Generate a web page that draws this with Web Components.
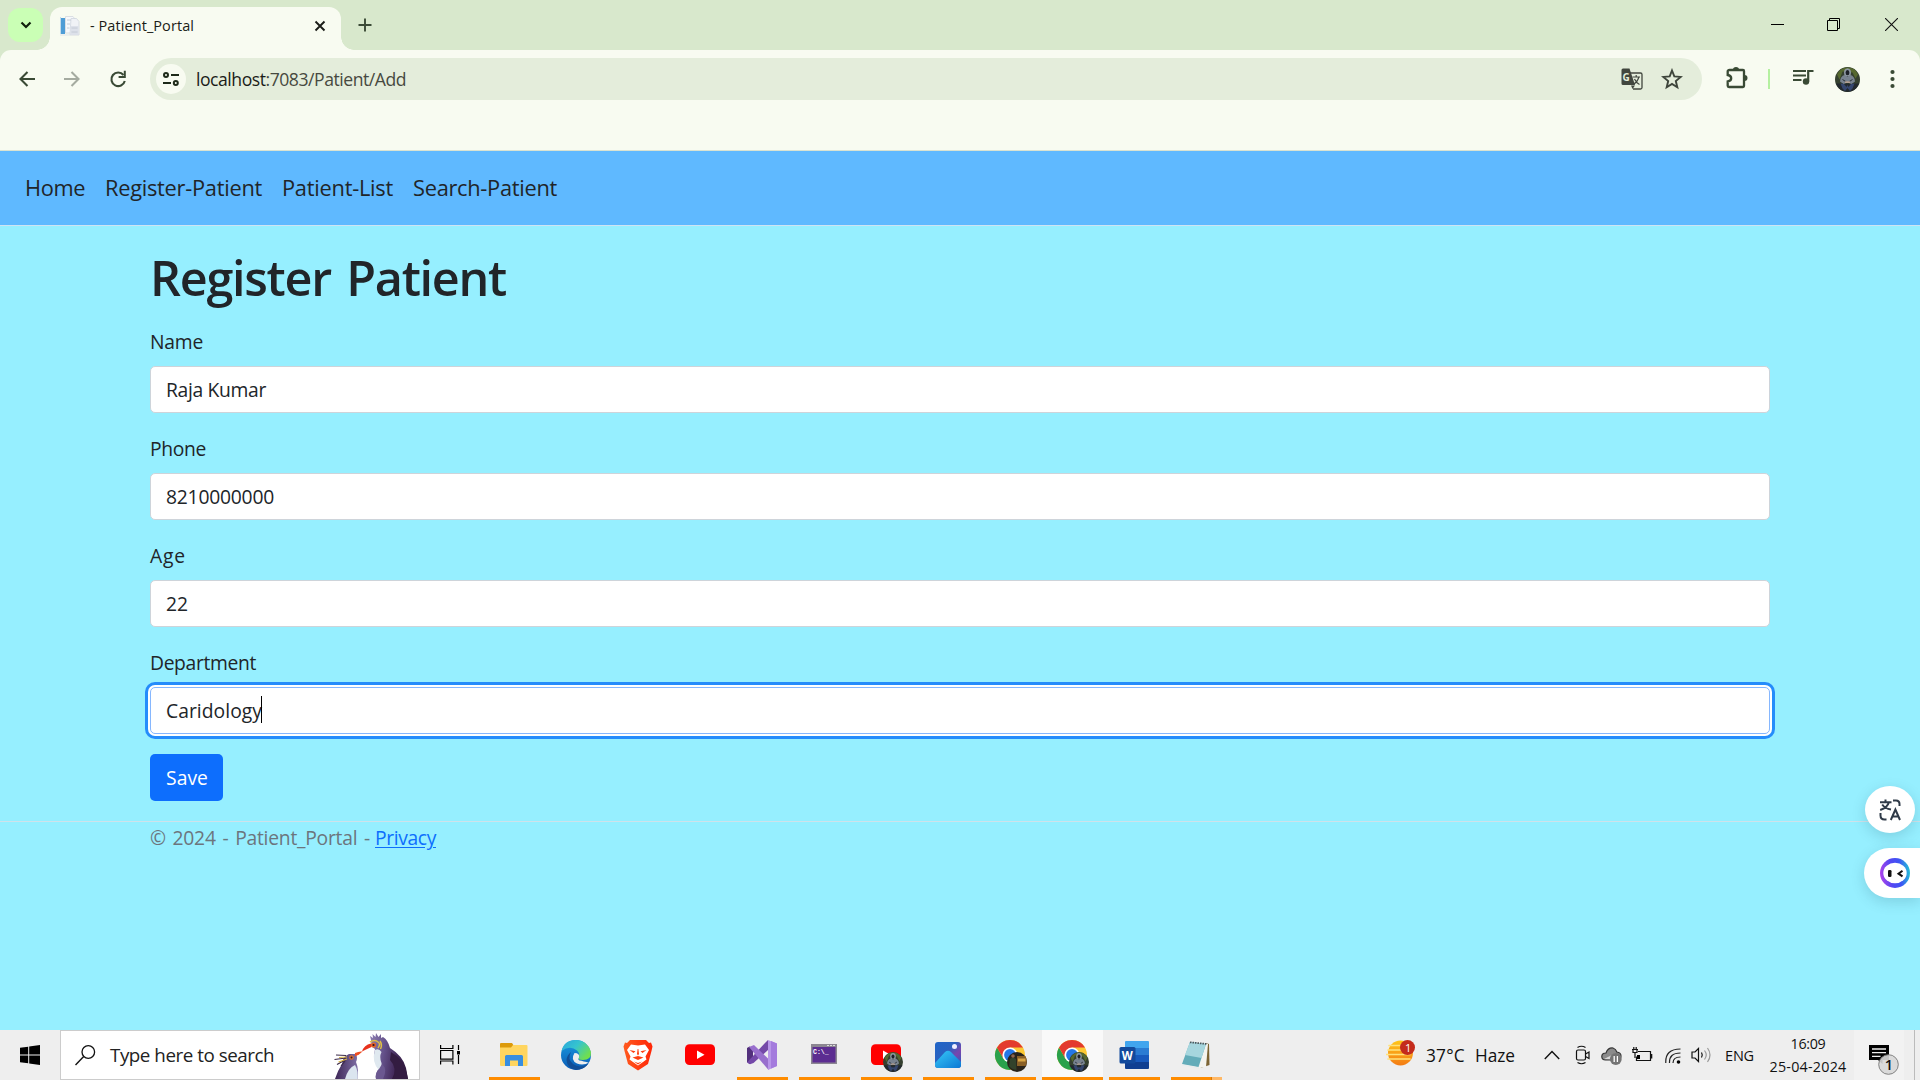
<!DOCTYPE html>
<html lang="en">
<head>
<meta charset="utf-8">
<title>- Patient_Portal</title>
<style>
html,body{margin:0;height:100%;overflow:hidden}
body{font-family:"Open Sans","Noto Sans",sans-serif;color:#212529;background:#96efff}
</style>
</head>
<body>
<desktop-screen></desktop-screen>
<script>
const define = (name, html, setup) => {
  const t = document.createElement('template');
  t.innerHTML = html;
  customElements.define(name, class extends HTMLElement {
    connectedCallback() {
      if (this.shadowRoot) return;
      this.attachShadow({mode: 'open'}).append(t.content.cloneNode(true));
      if (setup) setup(this, this.shadowRoot);
    }
  });
};

/* ---------- icons: [width, height, svg body] ---------- */
const avatar = (x, y, r) => `<circle cx="${x}" cy="${y}" r="${r}" fill="#35402f"/>
<g transform="translate(${x} ${y}) scale(${r / 12.5})"><path d="M-10.500-5Q-7-12 0-12 8-12 10.500-5L8-1 5-7-5-8-8 0z" fill="#56682f"/><path d="M-11.500 4h23q-3 8-11.500 8.500Q-8.500 12-11.500 4z" fill="#23292e"/><path d="M-3.500-7Q-3.500-11 0-11.300 3.500-11 3.500-7L3-3.500H-3z" fill="#8d97a2"/><ellipse cy="-6.800" rx="1.900" ry="2.600" fill="#1d2028"/><path d="M-3-4.500Q-7-3.500-7.500 2L-4 4.500 0 3 4 4.500 7.500 2Q7-3.500 3-4.500L0-3z" fill="#78828f"/><path d="M-5 0L-1 2.500M5 0L1 2.500" stroke="#2a3038" stroke-width="1"/><path d="M-2.500 1.800h5v1.700h-5z" fill="#b39f92"/><path d="M-7 4L-3.500 4.500-1 7.500 0 5.500 1 7.500 3.500 4.500 7 4 5 9 2.500 11.500 0 8.500-2.500 11.500-5 9z" fill="#35466f"/></g>`;
const chrome = (x, y) => `<g transform="translate(${x} ${y})"><circle r="15" fill="#fcc934"/><path d="M-13-7.500A15 15 0 0 0 0 15L6.500 3.800 0 7.500-6.500 3.800z" fill="#2aa14b"/><path d="M-13-7.500L-6.500 3.800 0-7.500H13A15 15 0 0 0-13-7.500z" fill="#e33b2e"/><circle r="7.600" fill="#fff"/><circle r="5.900" fill="#2477e6"/></g>`;
const ICONS = {
  down: [12, 10, `<path d="M1.500 2.500L6 7l4.500-4.500" fill="none" stroke="#10200c" stroke-width="2.200"/>`],
  favicon: [20, 20, `<path d="M1 2h4v16H1z" fill="#4f9dd6"/><path d="M0 1h1v17H0z" fill="#c3dcec"/><path d="M5.500.500h7.500l3 4V17H5.500z" fill="#f6f8fb" stroke="#d3d8e0" stroke-width=".8"/><path d="M11 2.500h5.500l2.500 3V19h-9z" fill="#f0f2f6" stroke="#cfd5de" stroke-width=".8"/><path d="M10.500 10h8v9h-8z" fill="#dde1ea"/><path d="M11.500 12h6M11.500 16h6M7 4h4M7 8h3M7 12h2.500" stroke="#c2c8d4" stroke-width=".9"/><path d="M0 19h10" stroke="#dfe3e8"/>`],
  tabclose: [12, 12, `<path d="M1.500 1.500l9 9M10.500 1.500l-9 9" stroke="#1b1c18" stroke-width="1.900"/>`],
  plus: [14, 14, `<path d="M7 .5v13M.5 7h13" stroke="#3b4b36" stroke-width="1.900"/>`],
  min: [13, 13, `<path d="M0 6.500h13" stroke="#000"/>`],
  max: [13, 13, `<path d="M.5 2.500h10v10H.5zM2.500 2.500v-2h10v10h-2" fill="none" stroke="#000"/>`],
  close: [13, 13, `<path d="M0 0l13 13M13 0L0 13" stroke="#111" stroke-width="1.100"/>`],
  back: [16, 16, `<path d="M16 8H2M8.500 1L1.500 8l7 7" fill="none" stroke="#3a4a35" stroke-width="2.100"/>`],
  forward: [16, 16, `<path d="M0 8h14M7.500 1l7 7-7 7" fill="none" stroke="#a5aba0" stroke-width="2.100"/>`],
  reload: [18, 18, `<path d="M14.500 5A6.800 6.800 0 1 0 15.800 11" fill="none" stroke="#3a4a35" stroke-width="2.100"/><path d="M16.800.8v7.200H9.600V6h5.200V.8z" fill="#3a4a35"/>`],
  site: [16, 16, `<g fill="none" stroke="#1e2a1a" stroke-width="2"><circle cx="3" cy="4" r="2"/><path d="M8 4h8M0 12h8"/><circle cx="12.800" cy="12" r="2"/></g>`],
  gtranslate: [22, 22, `<path d="M9 5h10.500q1.500 0 1.500 1.500v13q0 1.500-1.500 1.500H12" fill="none" stroke="#41463e" stroke-width="1.300"/><path d="M2 .5h6.500L14 17H2Q.5 17 .5 15.500V2Q.5.5 2 .5zM10 17.500h4L11.500 21z" fill="#41463e"/><text x="1.600" y="12.700" font-size="10" font-weight="700" font-family="Open Sans" fill="#e4edda">G</text><path d="M11.500 9h7.500M15.200 7v2M17.800 9q-1 4.500-5 7M13.500 11q1.500 3.500 5 5.500" fill="none" stroke="#41463e" stroke-width="1.200"/>`],
  star: [22, 22, `<path d="M11 2.500l2.300 5.900 6.400.5-4.900 4.100 1.500 6.200L11 15.900l-5.300 3.300L7.200 13 2.300 8.900l6.400-.5z" fill="none" stroke="#3e453b" stroke-width="1.900"/>`],
  puzzle: [22, 22, `<path d="M3.500 3H17q1 0 1 1v15q0 1-1 1H3q-1.300 0-1.300-1.300v-4.200Q5.200 14 5.200 11.300T1.700 8V4.300Q1.700 3 3.500 3z" fill="none" stroke="#3a4a35" stroke-width="2.300"/><path d="M7 2.500Q7 0 10 0t3 2.500zM18.500 8Q21.500 8 21.500 11t-3 3z" fill="#3a4a35"/>`],
  music: [21, 17, `<path d="M0 2h13M0 6.500h13M0 11h8.500" stroke="#3a4a35" stroke-width="2"/><circle cx="13" cy="12.500" r="3.200" fill="#3a4a35"/><path d="M15.200 12.500V2h5.300" fill="none" stroke="#3a4a35" stroke-width="2.200"/>`],
  avatar: [25, 25, avatar(12.5, 12.5, 12.5)],
  dots: [5, 20, `<g fill="#3a4a35"><circle cx="2.500" cy="3" r="2.100"/><circle cx="2.500" cy="10" r="2.100"/><circle cx="2.500" cy="17" r="2.100"/></g>`],
  start: [20, 20, `<path d="M0 2.800L8.200 1.700V9.500H0zM9.200 1.500L20 0V9.500H9.200zM0 10.500h8.200v7.800L0 17.200zM9.200 10.500H20V20L9.200 18.500z"/>`],
  search: [21, 21, `<circle cx="13.300" cy="7" r="6.300" fill="none" stroke="#111" stroke-width="1.300"/><path d="M8.700 11.500L.5 20" stroke="#111" stroke-width="1.400"/>`],
  penguins: [76, 48, `<defs><linearGradient id="p" x1="0" x2="1" y1=".4" y2=".6"><stop stop-color="#8778ac"/><stop offset=".35" stop-color="#64518a"/><stop offset=".7" stop-color="#432a5a"/><stop offset="1" stop-color="#2f1a3d"/></linearGradient><linearGradient id="q" x1="0" x2="1"><stop stop-color="#3d2757"/><stop offset="1" stop-color="#7f6fa5"/></linearGradient></defs>
<path d="M2 48Q5 39 9 33 10 25 16 23L23 23Q25 27 23 31 26 38 24.500 48z" fill="url(#q)"/><path d="M12 48Q15 37 22 34 25.500 40 24.500 48z" fill="#dbe5ef"/><path d="M13 24.500L3 24M13 27L1.500 28.500M13 28.500L4 33.500M12 30L8 35" fill="none" stroke="#3c2a4a" stroke-width="1.200"/><path d="M14 26L6 26.500M14 28L5.500 31" stroke="#d9b545" stroke-width="1.200"/><path d="M22 22Q26 20 29.500 20.500L26 23.500 22 25.500z" fill="#ee4f22"/><circle cx="18.500" cy="26.500" r="2.200" fill="#e0702a"/><circle cx="18.500" cy="26.500" r="1" fill="#2a1735"/>
<path d="M38 9L37 5l3 2-.5-4 3 3 .5-4 2.500 4L48 3l0 4 2-1Q55 9 57 17 70 25 73 37L75 48H43Q42 43 46 37 39 29 42 18 38 16 38 9z" fill="url(#p)"/><path d="M42 19Q46 17 48.500 21 46 26 48.500 32L49 37 46.500 40Q38 31 42 19z" fill="#dfe8ef"/><path d="M58 21Q70 28 73 39L75 48H59Q65 37 57 29z" fill="#331c41"/><path d="M49 33Q55 38 50 48H43Q41.500 43 46 38z" fill="#6b5890"/><path d="M29 20.500Q31 14 38 12.500L38.500 16 32 19z" fill="#e8321c"/><path d="M37 11Q42 8 45 11 48 13 45 17M47 10q2.500 4 .5 8" fill="none" stroke="#dfc044" stroke-width="1.500"/><circle cx="40.500" cy="14" r="2.600" fill="#e46425"/><circle cx="40.500" cy="14" r="1.100" fill="#25122c"/>`],
  taskview: [20, 20, `<path d="M.6 0v3.500h12.300V0M.6 19.500V16h12.300v3.500M.6 5.500h12.300v8.700H.6zM18.500 0v5M18.500 10v9" fill="none" stroke="#000" stroke-width="1.200"/><path d="M17 6h3v3.500h-3z"/>`],
  explorer: [62, 50, `<path d="M16 14q0-1 1-1h11l2 3v6H16z" fill="#dc9a0b"/><path d="M16 17.500h11l2-2.500h13.500q1 0 1 1v19q0 1-1 1H17q-1 0-1-1z" fill="#ffd55f"/><path d="M21 36V26.500q0-1.500 1.500-1.500h15q1.500 0 1.500 1.500V36h-5v-5.500h-8V36z" fill="#388ee0"/>`],
  edge: [62, 50, `<defs><linearGradient id="e1" x1="0" y1="0" x2="1" y2=".6"><stop stop-color="#2ba5dc"/><stop offset=".5" stop-color="#35c4cf"/><stop offset="1" stop-color="#71df4d"/></linearGradient><linearGradient id="e2" x1="0" y1="0" x2="0" y2="1"><stop stop-color="#1a9be0"/><stop offset="1" stop-color="#0b5bb5"/></linearGradient></defs><circle cx="30" cy="25" r="15" fill="url(#e2)"/><path d="M15.500 21Q18 10 30 10 42 10.500 45 22 45.500 30 37 30 31.500 30 32.500 27.500 34.500 24 31 20.500 24 15 15.500 21z" fill="url(#e1)"/><path d="M25 22Q21 29 27 34 34 39 42.500 33.500 38 40 30 40 21 38 20.500 30 21 25 25 22z" fill="#124e96"/><path d="M28.500 23Q24 30 31 33.500 38 36 45 31.500L43.500 33Q37 31 33.500 30.500 31.500 29.500 33 27.500 34 23 28.500 23z" fill="#eee"/>`],
  brave: [62, 50, `<defs><linearGradient id="b" x1="0" x2="1"><stop stop-color="#ff5a1f"/><stop offset="1" stop-color="#ff2506"/></linearGradient></defs><path d="M22 10h16l3 3 2-.5 1.500 4L43.500 21l-3.500 13-10 6.500L20 34 16.500 21l-1-4.500 1.500-4 2 .5z" fill="url(#b)"/><path d="M23 14.500l7 1 7-1 4 5.500-3.500 6.500 1 3-3.500 2.500-5 3.500-5-3.500-3.500-2.500 1-3L19 20z" fill="#fff"/><path d="M21.500 20l6 1.200-2 1.800zM38.500 20l-6 1.200 2 1.800zM29.600 19h.8l.6 5-1 1.500-1-1.500zM24.500 27.500l5.500-1.500 5.500 1.500-5.500 2.500zM26 31.500l4 1.500 4-1.500-4 3z" fill="#ff4012"/>`],
  youtube: [62, 50, `<rect x="15" y="14.300" width="30" height="20.700" rx="4.500" fill="#f00"/><path d="M27 20.500l7.500 4.300-7.500 4.300z" fill="#fff"/>`],
  vs: [62, 50, `<path d="M15 18l2.500-1.500 3.500 2v13l-3.500 2.500L15 32z" fill="#52307c"/><path d="M15 32.500l3 1.800 3.500-1.300L36 20V10L33 13z" fill="#7449a8"/><path d="M17 17l5-2L36.500 29v11z" fill="#986fcd"/><path d="M36 10l9 3.500v22.500L36 40z" fill="#b896e8"/><path d="M39 11l6 2.500v22.500l-6 2.500z" fill="#a47bdd"/>`],
  cmd: [62, 50, `<rect x="17" y="14" width="26" height="20" fill="#8b8691"/><path d="M18.500 17h23v15.500h-23z" fill="#5c2d91"/><path d="M33 15.500h8" stroke="#ddd" stroke-dasharray="2 1"/><text x="19" y="23.500" font-size="6.500" font-weight="700" font-family="Liberation Mono" fill="#fff">C:\\_</text>`],
  youtube2: [62, 50, `<rect x="15" y="14.300" width="30" height="20.700" rx="4.500" fill="#f00"/><path d="M27 20.500l7.500 4.300-7.500 4.300z" fill="#fff"/>${avatar(37, 32, 10)}`],
  photos: [62, 50, `<defs><linearGradient id="ph" x1="0" y1="0" x2="1" y2="1"><stop stop-color="#2065c8"/><stop offset=".4" stop-color="#2862c0"/><stop offset=".65" stop-color="#7945ad"/><stop offset="1" stop-color="#1a61c2"/></linearGradient><linearGradient id="pi" x1="0" y1="0" x2="1" y2="1"><stop stop-color="#37c9f7"/><stop offset="1" stop-color="#0a78d4"/></linearGradient></defs><rect x="17" y="12" width="26" height="26" rx="3" fill="url(#ph)"/><path d="M17 33L27 22q3-2.500 6 0l10 10v3q0 3-3 3H20q-3 0-3-3z" fill="url(#pi)"/><circle cx="36.500" cy="16.500" r="2.500" fill="#eef"/>`],
  chrome1: [62, 50, chrome(30, 25) + `<circle cx="37" cy="32" r="10" fill="#29231a"/><path d="M37 26h8.500q2.500 6 0 10h-8.500z" fill="#8a6026"/><path d="M38 28.500h7.500v3h-7.500z" fill="#d9a645"/><path d="M30 29q3-3 6 0l.5 11q-5-.5-7.500-4z" fill="#32422b"/><circle cx="33" cy="26" r="1.800" fill="#8d654e"/>`],
  chrome2: [62, 50, chrome(30, 25) + avatar(37, 32, 10)],
  word: [62, 50, `<path d="M21 12q0-1 1-1h22q1 0 1 1v6H21z" fill="#41a5ee"/><path d="M21 18h24v7H21z" fill="#2b7cd3"/><path d="M21 25h24v7H21z" fill="#185abd"/><path d="M21 32h24v6q0 1-1 1H22q-1 0-1-1z" fill="#103f91"/><rect x="15.500" y="17" width="16" height="16.500" rx="1.500" fill="#134a9c"/><text x="17.800" y="29.500" font-size="12" font-weight="700" font-family="Open Sans" fill="#fff" textLength="11" lengthAdjust="spacingAndGlyphs">W</text>`],
  notepad: [62, 50, `<path d="M40 13l3 1 .5 21-9 3z" fill="#7c6433"/><path d="M39 13l3 1-2 23-7 1z" fill="#f4f4ef"/><path d="M24 12l16 2-7.500 23L16 34z" fill="#63acb9"/><path d="M24 12l16 2-4.500 14L19 25z" fill="#a6d6de"/><path d="M24 12.300l17 1.700" stroke="#4b5559" stroke-width="1.800" stroke-dasharray="1.500 1"/><path d="M16 35l17 3" stroke="#e7eded"/>`],
  haze: [30, 28, `<defs><linearGradient id="h" x1="0" y1="0" x2="0" y2="1"><stop stop-color="#ffc61a"/><stop offset="1" stop-color="#f37b14"/></linearGradient></defs><circle cx="14.500" cy="14" r="12.500" fill="url(#h)"/><path d="M3 6.500h13M2 11h13M0 15.500h24M2 20h22" stroke="#ffe27b" stroke-width="1.700" stroke-linecap="round"/><circle cx="21.500" cy="8.500" r="7.500" fill="#c42b1c"/><text x="19" y="12.600" font-size="11" font-family="Open Sans" fill="#fff">1</text>`],
  up: [16, 10, `<path d="M.8 9L8 1.500 15.200 9" fill="none" stroke="#111" stroke-width="1.400"/>`],
  cam: [16, 20, `<g fill="none" stroke="#111" stroke-width="1.200"><rect x="1.500" y="5" width="9" height="10" rx="1.500"/><path d="M10.500 9l3.500-2v6.500l-3.500-2M2.500 2.500Q6.500 0 10.500 2.500M2.500 17.500q4 2.500 8 0"/></g>`],
  cloud: [21, 20, `<path d="M4.500 15Q.8 15 .8 11.500T5 8Q7 2.500 12 3 15 4 15.800 7 20 7.500 20 11T16 15z" fill="#8b8b8b" stroke="#333" stroke-width="1.200"/><path d="M3 14L14 8.500l6 3L16 14.500z" fill="#d9d9d9"/><circle cx="14.800" cy="14" r="5.900" fill="#747474"/><path d="M13.200 11v6M16.400 11v6" stroke="#fff" stroke-width="1.300"/>`],
  battery: [21, 16, `<path d="M6 4.500h12.500v9H4.500v-4M18.500 7.500h1.200v3.500h-1.200" fill="none" stroke="#111" stroke-width="1.200"/><path d="M1 2.500v3h4v-3M3 5v6M0 2.500h6M1.800 0v2.500M4.200 0v2.500" fill="none" stroke="#111" stroke-width="1.200"/><path d="M5 8h3v4H5z"/>`],
  wifi: [16, 17, `<g fill="none" stroke="#222" stroke-width="1.200"><path d="M.8 16Q0 2 15.500 2M4.500 16Q4 6 15.500 6M8 16Q8 10 15.500 10"/></g><circle cx="13.500" cy="15" r="1.800"/>`],
  volume: [21, 18, `<g fill="none" stroke="#111" stroke-width="1.200"><path d="M1 6h3L7.500 2.500v13L4 12H1z"/><path d="M10.500 6.500q1.500 2.500 0 5"/></g><path d="M13.500 4.500q3.500 4.500 0 9M16.500 2q5 7 0 14" fill="none" stroke="#999" stroke-width="1.200"/>`],
  notice: [31, 31, `<path d="M1 1h20v15H14.500v4L10 16H1z"/><path d="M4 5h14M4 8.700h14M4 12.300h8.500" stroke="#eee" stroke-width="1.300"/><circle cx="20.500" cy="20.500" r="9.800" fill="#d7d7d7" fill-opacity=".9" stroke="#777" stroke-width=".9"/><text x="16.800" y="25.800" font-size="14.500" font-weight="600" font-family="Open Sans" fill="#111">1</text>`],
  translate: [22, 22, `<g fill="none" stroke="#2f3a48" stroke-width="2"><path d="M1 3.200h11.500M6.500.5v2.700M9.800 3.500Q8.500 8.500 1.200 11M3.200 5.500Q6 9.500 12 10.500M14 1.500h3q3.500 0 3.500 3.500v2M1.500 14v2.500q0 4 4 4h2"/><path d="M11.800 21l4.600-10.500L21 21M13.200 17.500h6.500"/></g>`],
  bot: [30, 30, `<defs><linearGradient id="r" x1="0" y1=".8" x2="1" y2=".7"><stop stop-color="#b443ea"/><stop offset=".4" stop-color="#5347f2"/><stop offset=".7" stop-color="#3d55f4"/><stop offset="1" stop-color="#25b9d8"/></linearGradient></defs><circle cx="15" cy="15" r="15" fill="url(#r)"/><ellipse cx="15" cy="15" rx="11.700" ry="10.300" fill="#fff"/><rect x="8" y="12" width="3.500" height="7" rx="1.300" fill="#111"/><path d="M22.500 12.800l-4 2.900 4 2.700" fill="none" stroke="#111" stroke-width="2"/>`]
};
define('ui-icon', `<style>:host{display:block;flex:none}svg{display:block}</style>`, (el, root) => {
  const [w, h, body] = ICONS[el.getAttribute('name')];
  root.innerHTML += `<svg width="${w}" height="${h}" viewBox="0 0 ${w} ${h}">${body}</svg>`;
});

/* text tracked to an exact advance width */
define('fit-text', `<style>:host{display:block;flex:none;white-space:nowrap}span{display:inline-block}</style><span><slot></slot></span>`, (el, root) => {
  const w = +el.getAttribute('w'), s = root.querySelector('span');
  const n = el.textContent.length, natural = s.getBoundingClientRect().width;
  s.style.letterSpacing = ((w - natural) / n) + 'px';
  el.style.width = w + 'px';
});

define('tab-strip', `<style>
:host{display:flex;height:50px;background:#d8e8cc;align-items:flex-start}
.menu{width:35px;height:34px;margin:8px 0 0 8px;border-radius:12px;background:#caffb5;display:flex;align-items:center;justify-content:center}
.tab{box-sizing:border-box;width:291px;height:43px;margin:7px 0 0 7px;background:#f8fbf1;border-radius:12px 12px 0 0;display:flex;align-items:center;padding:0 15px 6px 10px;position:relative}
.tab::before,.tab::after{content:"";position:absolute;bottom:0;width:13px;height:13px}
.tab::before{left:-13px;background:radial-gradient(circle at 0 0,transparent 12.500px,#f8fbf1 13px)}
.tab::after{right:-13px;background:radial-gradient(circle at 100% 0,transparent 12.500px,#f8fbf1 13px)}
fit-text{font-size:14.500px;line-height:20px;color:#1b1c18;margin-left:10px}
.x{margin-left:auto}.plus{margin:18px 0 0 17px}
.win{display:flex;gap:44px;margin:18px 22px 0 auto}
.win .m{margin:0 1px 0 -1px}
</style>
<div class="menu"><ui-icon name="down"></ui-icon></div>
<div class="tab"><ui-icon name="favicon"></ui-icon><fit-text w="104">- Patient_Portal</fit-text><ui-icon class="x" name="tabclose"></ui-icon></div>
<ui-icon class="plus" name="plus"></ui-icon>
<div class="win"><ui-icon name="min"></ui-icon><ui-icon class="m" name="max"></ui-icon><ui-icon name="close"></ui-icon></div>`);

define('tool-bar', `<style>
:host{display:block;height:100px;background:#d8e8cc}
.sheet{box-sizing:border-box;height:100px;background:#f8fbf1;border-radius:11px 11px 0 0;padding:8px 0 0}
.row{display:flex;align-items:center;height:42px}
.box{width:1552px;height:42px;border-radius:21px;background:#e4eddb;display:flex;align-items:center;box-sizing:border-box;padding:0 19px 0 6px;margin-left:23px}
.site{width:30px;height:30px;border-radius:50%;background:#f8fbf1;display:flex;align-items:center;justify-content:center}
fit-text{font-size:17.600px;line-height:24px;color:#474940;margin-left:10px}b{font-weight:400;color:#1b1c18}
.sep{width:2px;height:20px;background:#b5f0a0;margin:0 23px 0 20px}
</style><div class="sheet"><div class="row">
<ui-icon name="back" style="margin-left:19px"></ui-icon><ui-icon name="forward" style="margin-left:29px"></ui-icon><ui-icon name="reload" style="margin-left:29px"></ui-icon>
<div class="box"><div class="site"><ui-icon name="site"></ui-icon></div><fit-text w="210"><b>localhost</b>:7083/Patient/Add</fit-text><ui-icon name="gtranslate" style="margin-left:auto"></ui-icon><ui-icon name="star" style="margin-left:18px"></ui-icon></div>
<ui-icon name="puzzle" style="margin:-3px 0 0 24px"></ui-icon><div class="sep"></div><ui-icon name="music" style="margin-top:-3px"></ui-icon><ui-icon name="avatar" style="margin-left:21px"></ui-icon><ui-icon name="dots" style="margin-left:30px"></ui-icon>
</div></div>`);

define('site-nav', `<style>
:host{display:flex;height:76px;box-sizing:border-box;border-top:1px solid #d9e3d2;border-bottom:1px solid #cfe3f3;background:#5fb9ff;align-items:center;padding:0 0 0 25px;gap:20px;font-size:21.800px;line-height:34px;color:#212529}
</style><fit-text w="60">Home</fit-text><fit-text w="157">Register-Patient</fit-text><fit-text w="111">Patient-List</fit-text><fit-text w="144">Search-Patient</fit-text>`);

define('labelled-input', `<style>
:host{display:flex;flex-direction:column;gap:9px;padding-top:1px;font-size:19.300px;line-height:30px}
.in{box-sizing:border-box;height:47px;border:1px solid #ced4da;border-radius:5px;background:#fff;padding:0 15px;display:flex;align-items:center}
:host([focused]) .in{border-color:#86b7fe;box-shadow:0 0 0 2px #fff,0 0 0 5px #258cfb}
i{display:none;width:1px;height:27px;background:#000;margin:-2px 0 0 -1px}
:host([focused]) i{display:block}
</style>`, (el, root) => {
  const a = n => el.getAttribute(n);
  root.innerHTML += `<fit-text w="${a('lw')}">${a('label')}</fit-text><div class="in"><fit-text w="${a('vw')}">${a('value')}</fit-text><i></i></div>`;
});

define('patient-form', `<style>
:host{display:block;padding:21px 150px 20px}
h1{margin:0 0 19px;font-size:48.500px;line-height:60px;font-weight:600;word-spacing:4px}
.fields{display:flex;flex-direction:column;gap:20px}
.save{box-sizing:border-box;width:73px;height:47px;margin-top:20px;border-radius:5px;background:#0d6efd;color:#fff;display:flex;align-items:center;padding-left:16px;font-size:19.300px;line-height:30px}
</style><h1><fit-text w="356">Register Patient</fit-text></h1><div class="fields">
<labelled-input label="Name" lw="53" value="Raja Kumar" vw="100"></labelled-input>
<labelled-input label="Phone" lw="56" value="8210000000" vw="108"></labelled-input>
<labelled-input label="Age" lw="36" value="22" vw="22"></labelled-input>
<labelled-input label="Department" lw="106" value="Caridology" vw="96" focused></labelled-input>
</div><div class="save"><fit-text w="42">Save</fit-text></div>`);

define('site-footer', `<style>
:host{display:flex;gap:5px;border-top:1px solid #cfe2ea;padding:0 150px;font-size:19.300px;line-height:31px;color:#6c757d;word-spacing:2px}
a{color:#0d6efd}u{text-underline-offset:2px}
</style><fit-text w="220">© 2024 - Patient_Portal -</fit-text><a><fit-text w="61"><u>Privacy</u></fit-text></a>`);

define('float-tools', `<style>
:host{position:absolute;right:0;top:786px;display:flex;flex-direction:column;align-items:flex-end;gap:15px}
div{background:#fff;display:flex;align-items:center;box-sizing:border-box;box-shadow:0 4px 14px rgba(20,70,90,.18)}
.t{width:50px;height:47px;border-radius:50%;margin-right:5px;justify-content:center}
.b{width:56px;height:50px;border-radius:25px 0 0 25px;padding-left:16px}
</style><div class="t"><ui-icon name="translate"></ui-icon></div><div class="b"><ui-icon name="bot"></ui-icon></div>`);

define('task-item', `<style>
:host{display:flex;width:62px;height:50px;flex:none;flex-direction:column}
.c{height:50px;width:62px}
.bar{height:3px;width:51px;margin:-3px 0 0 5px;display:none;background:#ff8c00}
:host([open]) .bar{display:block}
:host([active]) .c{width:61px;background:#f9f9f9}
:host([active]) .bar{width:61px;margin-left:0}
:host([stack]) .bar{background:linear-gradient(90deg,#ff8c00 40px,#d97a0a 40px,#d97a0a 41px,#ffb866 41px)}
</style><div class="c"></div><div class="bar"></div>`, (el, root) => {
  root.querySelector('.c').innerHTML = `<ui-icon name="${el.getAttribute('icon')}"></ui-icon>`;
});

define('task-bar', `<style>
:host{display:flex;height:50px;background:#eee;align-items:center;color:#111}
.start{margin:0 20px}
.search{box-sizing:border-box;width:360px;height:50px;background:#fff;border:1px solid #ccc;display:flex;align-items:center;padding-left:14px;overflow:hidden}
.search fit-text{font-size:18.800px;line-height:26px;margin:-1px 0 0 14px;color:#222}
.tray{display:flex;align-items:center;margin-left:auto;height:50px}
.tray fit-text{font-size:17.300px;line-height:24px}
.tray fit-text.w{margin:2px 0 0 10px}
.clock{display:flex;flex-direction:column;align-items:center;width:78px;margin-left:15px}
.clock fit-text{font-size:14.300px;line-height:23px}
.note{width:50px;height:50px;background:#f2f2f2;margin-left:7px;box-sizing:border-box;padding:14px 0 0 14px}
.edge{width:1px;height:50px;background:#bbb;margin:0 5px 0 10px}
</style>
<ui-icon class="start" name="start"></ui-icon>
<div class="search"><ui-icon name="search"></ui-icon><fit-text w="164">Type here to search</fit-text><ui-icon name="penguins" style="margin-left:59px"></ui-icon></div>
<ui-icon name="taskview" style="margin:0 24px 0 20px"></ui-icon>
<task-item icon="explorer" open></task-item><task-item icon="edge"></task-item><task-item icon="brave"></task-item><task-item icon="youtube"></task-item><task-item icon="vs" open></task-item><task-item icon="cmd" open></task-item><task-item icon="youtube2" open></task-item><task-item icon="photos" open></task-item><task-item icon="chrome1" open></task-item><task-item icon="chrome2" open active></task-item><task-item icon="word" open></task-item><task-item icon="notepad" open stack></task-item>
<div class="tray"><ui-icon name="haze" style="margin-top:-5px"></ui-icon><fit-text class="w" w="39">37°C</fit-text><fit-text class="w" w="40">Haze</fit-text>
<ui-icon name="up" style="margin-left:29px"></ui-icon><ui-icon name="cam" style="margin-left:15px"></ui-icon><ui-icon name="cloud" style="margin-left:10px"></ui-icon><ui-icon name="battery" style="margin-left:10px"></ui-icon><ui-icon name="wifi" style="margin-left:12px"></ui-icon><ui-icon name="volume" style="margin-left:10px"></ui-icon><fit-text w="29" style="margin:1px 0 0 13px;font-size:14.500px">ENG</fit-text>
<div class="clock"><fit-text w="35">16:09</fit-text><fit-text w="77">25-04-2024</fit-text></div><div class="note"><ui-icon name="notice"></ui-icon></div><div class="edge"></div></div>`);

define('desktop-screen', `<style>
:host{display:flex;flex-direction:column;width:1920px;height:1080px;overflow:hidden;position:relative}
main{flex:1;background:#96efff}
</style><tab-strip></tab-strip><tool-bar></tool-bar><site-nav></site-nav><main><patient-form></patient-form><site-footer></site-footer></main><task-bar></task-bar><float-tools></float-tools>`);
</script>
</body>
</html>
